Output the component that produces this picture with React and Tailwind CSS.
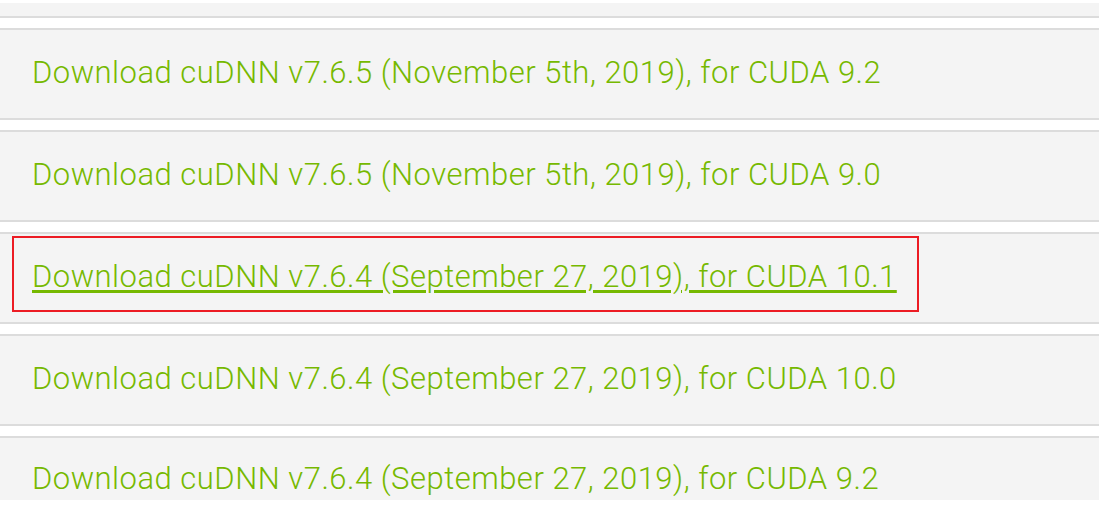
const downloads = [
  { label: "Download cuDNN v7.6.5 (November 5th, 2019), for CUDA 9.2" },
  { label: "Download cuDNN v7.6.5 (November 5th, 2019), for CUDA 9.0" },
  { label: "Download cuDNN v7.6.4 (September 27, 2019), for CUDA 10.1", active: true },
  { label: "Download cuDNN v7.6.4 (September 27, 2019), for CUDA 10.0" },
  { label: "Download cuDNN v7.6.4 (September 27, 2019), for CUDA 9.2", cut: true },
];

const App = () => {
  return (
    <div
      className="relative h-[506px] w-[1108px] overflow-hidden bg-white pt-[3px] pr-[9px]"
      style={{ fontFamily: "Roboto, 'Liberation Sans', sans-serif" }}
    >
      <div className="flex flex-col gap-[10px]">
        {/* partial row peeking in at the top */}
        <div className="h-[15px] border-b-2 border-[#dcdcdc] bg-[#f4f4f4]" />

        {downloads.map((item) => (
          <div
            key={item.label}
            className={
              item.cut
                ? "flex h-[64px] items-end border-t-2 border-[#dcdcdc] bg-[#f4f4f4] pl-[32px] pb-[6px]"
                : "flex h-[92px] items-center border-y-2 border-[#dcdcdc] bg-[#f4f4f4] pl-[32px] pb-[3px]"
            }
          >
            <a
              href="#"
              className={
                item.active
                  ? "text-[31px] font-light leading-none tracking-[0.5px] text-[#76b900] underline decoration-[3px] underline-offset-[3px]"
                  : "text-[31px] font-light leading-none tracking-[0.5px] text-[#76b900]"
              }
            >
              {item.label}
            </a>
          </div>
        ))}
      </div>

      {/* red highlight box */}
      <div className="absolute left-[12px] top-[236px] h-[76px] w-[907px] border-2 border-[#ec1c24]" />
    </div>
  );
};

export default App;
